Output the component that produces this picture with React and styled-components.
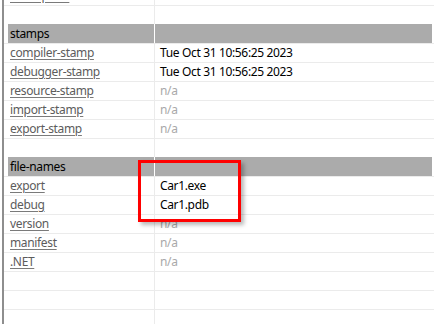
import React from "react";
import styled, { createGlobalStyle } from "styled-components";

const Global = createGlobalStyle`
  html, body { margin: 0; padding: 0; background: #fff; overflow: hidden; }
  body { font-family: "Noto Sans", "Segoe UI", sans-serif; font-size: 12px; letter-spacing: -0.35px; }
`;

const Page = styled.div`
  position: relative;
  width: 434px;
  height: 324px;
  overflow: hidden;
  padding-left: 2px;
  box-sizing: border-box;
`;

const Table = styled.div`
  border-left: 2px solid #8e8e8e;
  margin-top: -14px;
  display: flex;
  flex-direction: column;
  height: 360px;
`;

const Row = styled.div`
  display: grid;
  grid-template-columns: 150px 1fr;
  height: 19px;
  box-sizing: border-box;
  border-top: 1px solid #ebebeb;
  flex: none;
`;

const HeaderRow = styled.div`
  display: grid;
  grid-template-columns: 146px 1fr;
  height: 19px;
  box-sizing: border-box;
  margin-left: 4px;
  margin-right: 2px;
  flex: none;
`;

const HeaderCell = styled.div`
  background: #ababab;
  color: #000;
  line-height: 19px;
  padding-left: ${(p) => (p.$first ? "2px" : "0")};
  border-left: ${(p) => (p.$first ? "none" : "1px solid #fff")};
  white-space: nowrap;
`;

const LabelCell = styled.div`
  padding-left: 6px;
  line-height: 18px;
  white-space: nowrap;
  overflow: hidden;
`;

const Link = styled.span`
  color: #5c5c5c;
  text-decoration: underline;
  text-underline-offset: 2px;
  text-decoration-color: #7a7a7a;
`;

const ValueCell = styled.div`
  border-left: 1px solid #ebebeb;
  padding-left: 5px;
  line-height: 18px;
  white-space: nowrap;
  color: ${(p) => (p.$na ? "#a9a9a9" : "#000")};
`;

const Highlight = styled.div`
  position: absolute;
  left: 138px;
  top: 160px;
  width: 103px;
  height: 62px;
  box-sizing: border-box;
  border: 3px solid #ff0000;
  box-shadow: 3px 3px 4px rgba(0, 0, 0, 0.28);
  pointer-events: none;
`;

const rows = [
  { label: "description", value: "n/a" },
  { empty: true },
  { header: "stamps" },
  { label: "compiler-stamp", value: "Tue Oct 31 10:56:25 2023" },
  { label: "debugger-stamp", value: "Tue Oct 31 10:56:25 2023" },
  { label: "resource-stamp", value: "n/a" },
  { label: "import-stamp", value: "n/a" },
  { label: "export-stamp", value: "n/a" },
  { empty: true },
  { header: "file-names" },
  { label: "export", value: "Car1.exe" },
  { label: "debug", value: "Car1.pdb" },
  { label: "version", value: "n/a" },
  { label: "manifest", value: "n/a" },
  { label: ".NET", value: "n/a" },
  { empty: true },
  { empty: true },
  { empty: true },
];

export default function App() {
  return (
    <>
      <Global />
      <Page>
        <Table>
          {rows.map((r, i) => {
            if (r.header)
              return (
                <HeaderRow key={i}>
                  <HeaderCell $first>{r.header}</HeaderCell>
                  <HeaderCell />
                </HeaderRow>
              );
            if (r.empty)
              return (
                <Row key={i}>
                  <LabelCell />
                  <ValueCell />
                </Row>
              );
            return (
              <Row key={i}>
                <LabelCell>
                  <Link>{r.label}</Link>
                </LabelCell>
                <ValueCell $na={r.value === "n/a"}>{r.value}</ValueCell>
              </Row>
            );
          })}
        </Table>
        <Highlight />
      </Page>
    </>
  );
}
